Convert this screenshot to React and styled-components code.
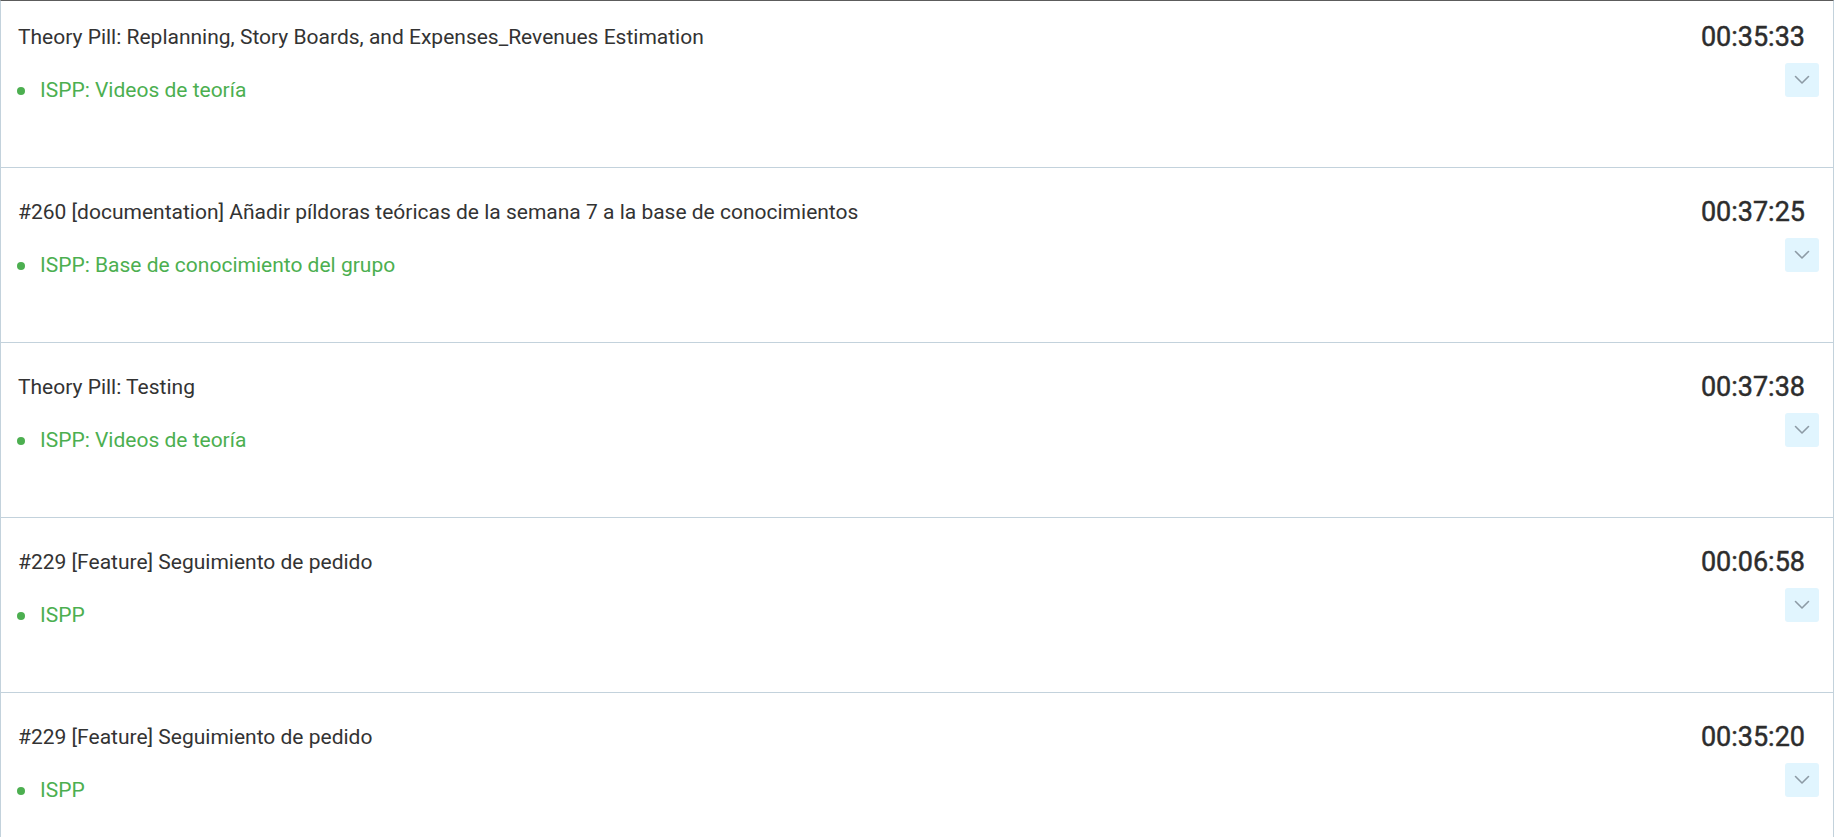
import React from "react";
import styled, { createGlobalStyle } from "styled-components";

const entries = [
  {
    title: "Theory Pill: Replanning, Story Boards, and Expenses_Revenues Estimation",
    project: "ISPP: Videos de teoría",
    time: "00:35:33",
  },
  {
    title: "#260 [documentation] Añadir píldoras teóricas de la semana 7 a la base de conocimientos",
    project: "ISPP: Base de conocimiento del grupo",
    time: "00:37:25",
  },
  {
    title: "Theory Pill: Testing",
    project: "ISPP: Videos de teoría",
    time: "00:37:38",
  },
  {
    title: "#229 [Feature] Seguimiento de pedido",
    project: "ISPP",
    time: "00:06:58",
  },
  {
    title: "#229 [Feature] Seguimiento de pedido",
    project: "ISPP",
    time: "00:35:20",
  },
];

function Chevron() {
  return (
    <svg width="16" height="10" viewBox="0 0 16 10" fill="none">
      <path d="M1.5 1.5L8 8l6.5-6.5" stroke="#8d9ba5" strokeWidth="1.6" strokeLinecap="round" strokeLinejoin="round" />
    </svg>
  );
}

function EntryRow({ title, project, time }) {
  return (
    <Row>
      <Info>
        <Title>{title}</Title>
        <Project>{project}</Project>
      </Info>
      <Side>
        <Time>{time}</Time>
        <ExpandButton aria-label="Expand">
          <Chevron />
        </ExpandButton>
      </Side>
    </Row>
  );
}

export default function App() {
  return (
    <>
      <GlobalStyle />
      <Frame>
        <List>
          {entries.map((e, i) => (
            <EntryRow key={i} {...e} />
          ))}
        </List>
      </Frame>
    </>
  );
}

const GlobalStyle = createGlobalStyle`
  html, body {
    margin: 0;
    padding: 0;
    overflow: hidden;
    background: #ffffff;
    font-family: Roboto, "Liberation Sans", sans-serif;
  }
  * {
    box-sizing: border-box;
  }
`;

const Frame = styled.div`
  width: 1834px;
  height: 837px;
  overflow: hidden;
  border-top: 1px solid #5c5c5c;
  border-left: 1px solid #c3d2dc;
  border-right: 1px solid #c3d2dc;
  background: #ffffff;
`;

const List = styled.div`
  margin-top: -8px;
  display: flex;
  flex-direction: column;
`;

const Row = styled.div`
  display: flex;
  justify-content: space-between;
  align-items: flex-start;
  height: 175px;
  flex-shrink: 0;
  padding: 29px 14px 0 17px;
  border-bottom: 1px solid #c3d2dc;
`;

const Info = styled.div`
  display: flex;
  flex-direction: column;
  gap: 21px;
`;

const Title = styled.div`
  font-size: 21px;
  line-height: 31.5px;
  color: #333333;
`;

const Project = styled.div`
  display: flex;
  align-items: center;
  font-size: 21px;
  line-height: 31.5px;
  color: #4caf50;

  &::before {
    content: "";
    width: 8px;
    height: 8px;
    border-radius: 50%;
    background: #4caf50;
    margin: 2px 15px 0 -1px;
  }
`;

const Side = styled.div`
  display: flex;
  flex-direction: column;
  align-items: flex-end;
`;

const Time = styled.div`
  font-size: 27px;
  line-height: 30px;
  font-weight: 400;
  -webkit-text-stroke: 0.45px #2d2d2d;
  color: #2d2d2d;
  padding-right: 14px;
`;

const ExpandButton = styled.button`
  margin-top: 11px;
  width: 34px;
  height: 34px;
  border: none;
  border-radius: 3px;
  background: #e1f5fe;
  display: flex;
  align-items: center;
  justify-content: center;
  padding: 0;
  cursor: pointer;
`;
